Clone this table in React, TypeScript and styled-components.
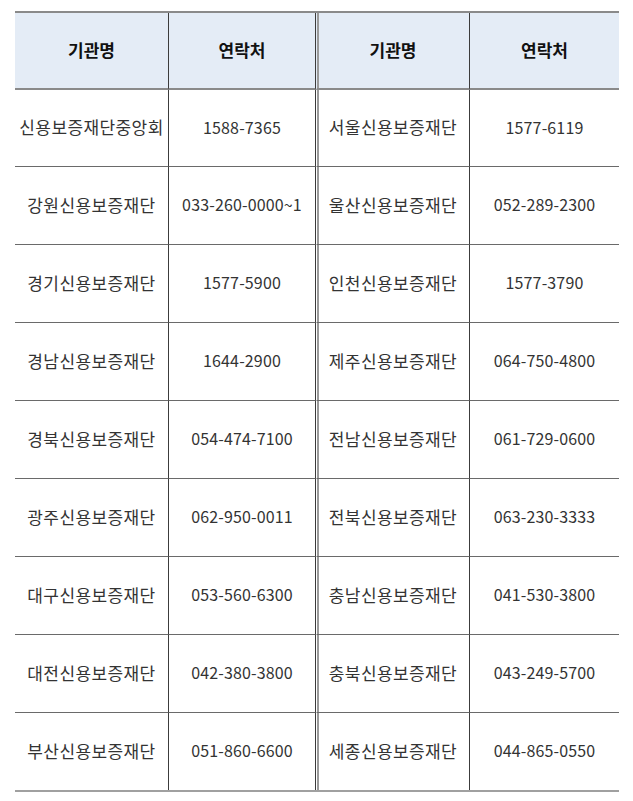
import React from 'react';
import styled, { createGlobalStyle } from 'styled-components';

const GlobalStyle = createGlobalStyle`
  html, body {
    margin: 0;
    padding: 0;
    background: #ffffff;
  }
  body {
    font-family: "Noto Sans CJK KR", "Noto Sans", sans-serif;
  }
`;

const Page = styled.div`
  width: 633px;
  height: 801px;
  padding: 11px 0 0 15px;
  box-sizing: border-box;
`;

const Table = styled.div`
  display: grid;
  grid-template-columns: 154px 147px 154px 149px;
  width: 604px;
  border-top: 2px solid #8a8a8a;
  border-bottom: 2px solid #a0a0a0;
`;

const Cell = styled.div<{ $col: number; $head?: boolean; $last?: boolean; $h: number }>`
  display: flex;
  align-items: center;
  justify-content: center;
  box-sizing: border-box;
  height: ${(p) => p.$h}px;
  padding-bottom: 3px;
  font-size: ${(p) => (p.$col % 2 === 0 || p.$head ? 17 : 16)}px;
  line-height: 1;
  letter-spacing: ${(p) => (p.$head ? 0 : p.$col % 2 === 0 ? 0.4 : 0.15)}px;
  white-space: nowrap;
  color: ${(p) => (p.$head ? '#111111' : '#333333')};
  font-weight: ${(p) => (p.$head ? 700 : 400)};
  background: ${(p) => (p.$head ? '#e4ecf6' : '#ffffff')};
  border-bottom: ${(p) =>
    p.$head ? '2px solid #8a8a8a' : p.$last ? 'none' : '1px solid #6a6a6a'};
  border-right: ${(p) => (p.$col < 3 ? '1px solid #3c3c3c' : 'none')};
  border-left: ${(p) => (p.$col === 2 ? '1px solid transparent' : 'none')};
  box-shadow: ${(p) => (p.$col === 2 ? 'inset 2px 0 0 #9a9a9a' : 'none')};
`;

const rows: [string, string, string, string][] = [
  ['신용보증재단중앙회', '1588-7365', '서울신용보증재단', '1577-6119'],
  ['강원신용보증재단', '033-260-0000~1', '울산신용보증재단', '052-289-2300'],
  ['경기신용보증재단', '1577-5900', '인천신용보증재단', '1577-3790'],
  ['경남신용보증재단', '1644-2900', '제주신용보증재단', '064-750-4800'],
  ['경북신용보증재단', '054-474-7100', '전남신용보증재단', '061-729-0600'],
  ['광주신용보증재단', '062-950-0011', '전북신용보증재단', '063-230-3333'],
  ['대구신용보증재단', '053-560-6300', '충남신용보증재단', '041-530-3800'],
  ['대전신용보증재단', '042-380-3800', '충북신용보증재단', '043-249-5700'],
  ['부산신용보증재단', '051-860-6600', '세종신용보증재단', '044-865-0550'],
];

const header = ['기관명', '연락처', '기관명', '연락처'];

export default function App() {
  return (
    <>
      <GlobalStyle />
      <Page>
        <Table>
          {header.map((h, i) => (
            <Cell key={'h' + i} $col={i} $head $h={77}>
              {h}
            </Cell>
          ))}
          {rows.map((r, ri) =>
            r.map((t, ci) => (
              <Cell
                key={ri + '-' + ci}
                $col={ci}
                $last={ri === rows.length - 1}
                $h={ri === 0 ? 77 : ri === rows.length - 1 ? 77 : 78}
              >
                {t}
              </Cell>
            ))
          )}
        </Table>
      </Page>
    </>
  );
}
